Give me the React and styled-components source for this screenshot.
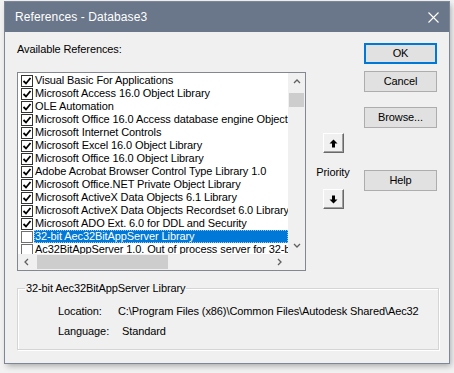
import React from 'react';
import styled, { createGlobalStyle } from 'styled-components';

const GlobalStyle = createGlobalStyle`
  html, body { margin: 0; padding: 0; background: #efefef; }
  body { font-family: "Liberation Sans", Arial, sans-serif; }
  * { box-sizing: border-box; }
`;

const Page = styled.div`
  width: 454px;
  height: 373px;
  overflow: hidden;
  background: #f2f2f2;
  padding: 2px 0 0 5px;
`;

const Window = styled.div`
  width: 444px;
  height: 361px;
  background: #f0f0f0;
  box-shadow: 0 0 0 1px #7d8797, 2px 3px 6px rgba(0, 0, 0, 0.3);
  display: flex;
  flex-direction: column;
`;

const TitleBar = styled.div`
  height: 30px;
  flex: none;
  background: #6a778a;
  display: flex;
  align-items: center;
  padding-left: 10px;
  color: #fff;
  font-size: 12px;
`;

const Title = styled.div`
  flex: 1;
  letter-spacing: 0.1px;
`;

const CloseBox = styled.div`
  width: 32px;
  height: 30px;
  display: flex;
  align-items: center;
  justify-content: center;
`;

const Body = styled.div`
  flex: 1;
  padding: 11px 12px 0 12px;
  font-size: 11px;
  letter-spacing: -0.1px;
  color: #000;
`;

const TopSection = styled.div`
  display: flex;
`;

const LeftCol = styled.div`
  width: 289px;
  flex: none;
`;

const Caption = styled.div`
  line-height: 13px;
  height: 13px;
  margin-bottom: 16px;
`;

const ListBox = styled.div`
  width: 289px;
  height: 199px;
  border: 1px solid #828790;
  background: #fff;
  display: grid;
  grid-template-columns: 270px 17px;
  grid-template-rows: 181px 16px;
`;

const Items = styled.div`
  overflow: hidden;
  padding-top: 1px;
`;

const Row = styled.div`
  height: 13px;
  display: flex;
  align-items: center;
  white-space: nowrap;
`;

const CheckWrap = styled.div`
  width: 12px;
  height: 12px;
  margin-left: 3px;
  margin-right: 1px;
  flex: none;
  display: flex;
`;

const ItemText = styled.div`
  flex: 1;
  height: 13px;
  line-height: 13px;
  padding-left: 1px;
  background: ${(p) => (p.$selected ? '#0078d7' : 'transparent')};
  color: ${(p) => (p.$selected ? '#fff' : '#000')};
  outline: ${(p) => (p.$selected ? '1px dotted #9cc9f0' : 'none')};
  outline-offset: -1px;
  overflow: hidden;
`;

const VScroll = styled.div`
  background: #f0f0f0;
  display: flex;
  flex-direction: column;
`;

const HScroll = styled.div`
  background: #f0f0f0;
  display: flex;
`;

const Corner = styled.div`
  background: #f0f0f0;
`;

const ArrowCell = styled.div`
  width: 17px;
  height: ${(p) => (p.$h ? '16px' : '17px')};
  flex: none;
  display: flex;
  align-items: center;
  justify-content: center;
`;

const VTrack = styled.div`
  flex: 1;
  padding: 3px 1px 0 1px;
`;

const VThumb = styled.div`
  height: 14px;
  background: #cdcdcd;
`;

const HTrack = styled.div`
  flex: 1;
  padding: 1px 0 1px 2px;
`;

const HThumb = styled.div`
  width: 131px;
  height: 100%;
  background: #cdcdcd;
`;

const MidCol = styled.div`
  width: 58px;
  flex: none;
  padding-top: 90px;
  padding-right: 4px;
  display: flex;
  flex-direction: column;
  align-items: center;
`;

const ArrowButton = styled.div`
  width: 21px;
  height: 20px;
  background: #f0f0f0;
  border-top: 1px solid #fff;
  border-left: 1px solid #fff;
  border-right: 1px solid #696969;
  border-bottom: 1px solid #696969;
  box-shadow: inset -1px -1px 0 #a0a0a0;
  display: flex;
  align-items: center;
  justify-content: center;
  margin-top: ${(p) => p.$mt || 0}px;
`;

const PriorityLabel = styled.div`
  margin-top: 12px;
  line-height: 14px;
`;

const RightCol = styled.div`
  width: 73px;
  flex: none;
  display: flex;
  flex-direction: column;
`;

const Button = styled.div`
  height: 21px;
  margin-top: ${(p) => p.$mt || 0}px;
  background: #e1e1e1;
  border: 1px solid ${(p) => (p.$default ? '#0078d7' : '#adadad')};
  box-shadow: ${(p) => (p.$default ? 'inset 0 0 0 1px #0078d7' : 'none')};
  display: flex;
  align-items: center;
  justify-content: center;
  line-height: 13px;
`;

const Group = styled.fieldset`
  margin: 11px -2px 0 0;
  padding: 10px 0 10px 0;
  border: 1px solid #d5d5d5;
  box-shadow: inset 1px 1px 0 #fff, 1px 1px 0 #fff;
  min-width: 0;
  height: 68px;
`;

const Legend = styled.legend`
  margin-left: 7px;
  padding: 0 1px;
  line-height: 13px;
`;

const InfoRows = styled.div`
  padding-left: 40px;
`;

const InfoRow = styled.div`
  display: flex;
  line-height: 13px;
  margin-top: ${(p) => p.$mt || 0}px;
  white-space: nowrap;
`;

const InfoLabel = styled.div`
  width: ${(p) => p.$w}px;
  flex: none;
`;

const Check = ({ checked }) => (
  <svg width="12" height="12" viewBox="0 0 12 12">
    <rect x="0.5" y="0.5" width="11" height="11" fill="#fff" stroke={checked ? '#333' : '#707070'} />
    {checked && (
      <path d="M2.5 6 L5 8.5 L9.5 3" fill="none" stroke="#000" strokeWidth="1.8" />
    )}
  </svg>
);

const Chevron = ({ dir }) => {
  const paths = {
    up: 'M1 5 L4 2 L7 5',
    down: 'M1 2 L4 5 L7 2',
    left: 'M5 1 L2 4 L5 7',
    right: 'M2 1 L5 4 L2 7',
  };
  return (
    <svg width="8" height="8" viewBox="0 0 8 8">
      <path d={paths[dir]} fill="none" stroke="#606060" strokeWidth="1.3" />
    </svg>
  );
};

const BlockArrow = ({ down }) => (
  <svg width="9" height="9" viewBox="0 0 9 9" style={{ transform: down ? 'rotate(180deg)' : 'none' }}>
    <path d="M4.5 0.5 L8.5 4.5 L6 4.5 L6 8.5 L3 8.5 L3 4.5 L0.5 4.5 Z" fill="#000" />
  </svg>
);

const items = [
  { t: 'Visual Basic For Applications', c: true },
  { t: 'Microsoft Access 16.0 Object Library', c: true },
  { t: 'OLE Automation', c: true },
  { t: 'Microsoft Office 16.0 Access database engine Object Library', c: true },
  { t: 'Microsoft Internet Controls', c: true },
  { t: 'Microsoft Excel 16.0 Object Library', c: true },
  { t: 'Microsoft Office 16.0 Object Library', c: true },
  { t: 'Adobe Acrobat Browser Control Type Library 1.0', c: true },
  { t: 'Microsoft Office.NET Private Object Library', c: true },
  { t: 'Microsoft ActiveX Data Objects 6.1 Library', c: true },
  { t: 'Microsoft ActiveX Data Objects Recordset 6.0 Library', c: true },
  { t: 'Microsoft ADO Ext. 6.0 for DDL and Security', c: true },
  { t: '32-bit Aec32BitAppServer Library', c: false, s: true },
  { t: 'Ac32BitAppServer 1.0. Out of process server for 32-bit applications', c: false },
];

export default function App() {
  return (
    <>
      <GlobalStyle />
      <Page>
        <Window>
          <TitleBar>
            <Title>References - Database3</Title>
            <CloseBox>
              <svg width="11" height="11" viewBox="0 0 11 11">
                <path d="M0.5 0.5 L10.5 10.5 M10.5 0.5 L0.5 10.5" stroke="#fff" strokeWidth="1.1" />
              </svg>
            </CloseBox>
          </TitleBar>
          <Body>
            <TopSection>
              <LeftCol>
                <Caption>Available References:</Caption>
                <ListBox>
                  <Items>
                    {items.map((it, i) => (
                      <Row key={i}>
                        <CheckWrap>
                          <Check checked={it.c} />
                        </CheckWrap>
                        <ItemText $selected={it.s}>{it.t}</ItemText>
                      </Row>
                    ))}
                  </Items>
                  <VScroll>
                    <ArrowCell>
                      <Chevron dir="up" />
                    </ArrowCell>
                    <VTrack>
                      <VThumb />
                    </VTrack>
                    <ArrowCell>
                      <Chevron dir="down" />
                    </ArrowCell>
                  </VScroll>
                  <HScroll>
                    <ArrowCell $h>
                      <Chevron dir="left" />
                    </ArrowCell>
                    <HTrack>
                      <HThumb />
                    </HTrack>
                    <ArrowCell $h>
                      <Chevron dir="right" />
                    </ArrowCell>
                  </HScroll>
                  <Corner />
                </ListBox>
              </LeftCol>
              <MidCol>
                <ArrowButton>
                  <BlockArrow />
                </ArrowButton>
                <PriorityLabel>Priority</PriorityLabel>
                <ArrowButton $mt={10}>
                  <BlockArrow down />
                </ArrowButton>
              </MidCol>
              <RightCol>
                <Button $default>OK</Button>
                <Button $mt={7}>Cancel</Button>
                <Button $mt={15}>Browse...</Button>
                <Button $mt={42}>Help</Button>
              </RightCol>
            </TopSection>
            <Group>
              <Legend>32-bit Aec32BitAppServer Library</Legend>
              <InfoRows>
                <InfoRow>
                  <InfoLabel $w={60}>Location:</InfoLabel>
                  <div>C:\Program Files (x86)\Common Files\Autodesk Shared\Aec32</div>
                </InfoRow>
                <InfoRow $mt={7}>
                  <InfoLabel $w={64}>Language:</InfoLabel>
                  <div>Standard</div>
                </InfoRow>
              </InfoRows>
            </Group>
          </Body>
        </Window>
      </Page>
    </>
  );
}
